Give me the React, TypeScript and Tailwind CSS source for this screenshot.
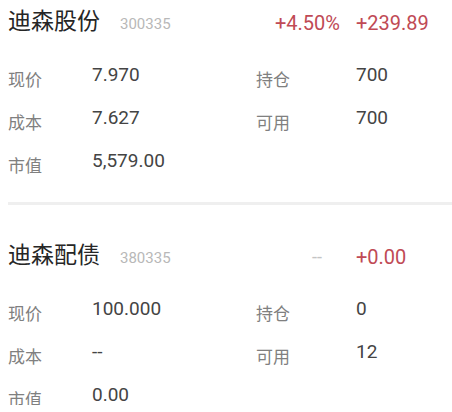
import React from 'react';

type Cell = { label: string; value: string };

type Holding = {
    name: string;
    code: string;
    rate: string;
    profit: string;
    rows: [Cell, Cell | null][];
};

const holdings: Holding[] = [
    {
        name: '迪森股份',
        code: '300335',
        rate: '+4.50%',
        profit: '+239.89',
        rows: [
            [{ label: '现价', value: '7.970' }, { label: '持仓', value: '700' }],
            [{ label: '成本', value: '7.627' }, { label: '可用', value: '700' }],
            [{ label: '市值', value: '5,579.00' }, null],
        ],
    },
    {
        name: '迪森配债',
        code: '380335',
        rate: '--',
        profit: '+0.00',
        rows: [
            [{ label: '现价', value: '100.000' }, { label: '持仓', value: '0' }],
            [{ label: '成本', value: '--' }, { label: '可用', value: '12' }],
            [{ label: '市值', value: '0.00' }, null],
        ],
    },
];

const font = { fontFamily: 'Roboto, "Noto Sans CJK SC", sans-serif' };

const Field: React.FC<{ cell: Cell | null; labelWidth: string }> = ({ cell, labelWidth }) => {
    if (!cell) return <div className="flex-1" />;
    return (
        <div className="flex items-center">
            <span className={`${labelWidth} text-[17px] text-[#808080]`}>{cell.label}</span>
            <span className="pb-[10px] text-[19px] text-[#444]">{cell.value}</span>
        </div>
    );
};

const HoldingCard: React.FC<{ item: Holding }> = ({ item }) => (
    <div className="px-2">
        <div className="flex h-[45px] items-center">
            <span className="text-[23px] text-[#262626]">{item.name}</span>
            <span className="ml-5 pt-[3px] text-[15px] text-[#b8b8b8]">{item.code}</span>
            <div className="flex-1" />
            {item.rate === '--' ? (
                <span className="mr-[18px] text-[18px] text-[#c4c4c4]">--</span>
            ) : (
                <span className="text-[20px] text-[#c04a55]">{item.rate}</span>
            )}
            <span className="ml-4 w-[88px] text-[20px] text-[#c04a55]">{item.profit}</span>
        </div>
        <div className="mt-[14px]">
            {item.rows.map(([left, right], i) => (
                <div key={i} className="flex h-[43px] items-center">
                    <div className="w-[248px]">
                        <Field cell={left} labelWidth="w-[84px]" />
                    </div>
                    <Field cell={right} labelWidth="w-[100px]" />
                </div>
            ))}
        </div>
    </div>
);

const App: React.FC = () => {
    return (
        <div className="h-[412px] w-[452px] bg-white" style={font}>
            <div className="h-[405px] overflow-hidden">
                <HoldingCard item={holdings[0]} />
                <div className="ml-2 mt-[14px] h-[3px] bg-[#efefef]" />
                <div className="mt-[29px]">
                    <HoldingCard item={holdings[1]} />
                </div>
            </div>
        </div>
    );
};

export default App;
